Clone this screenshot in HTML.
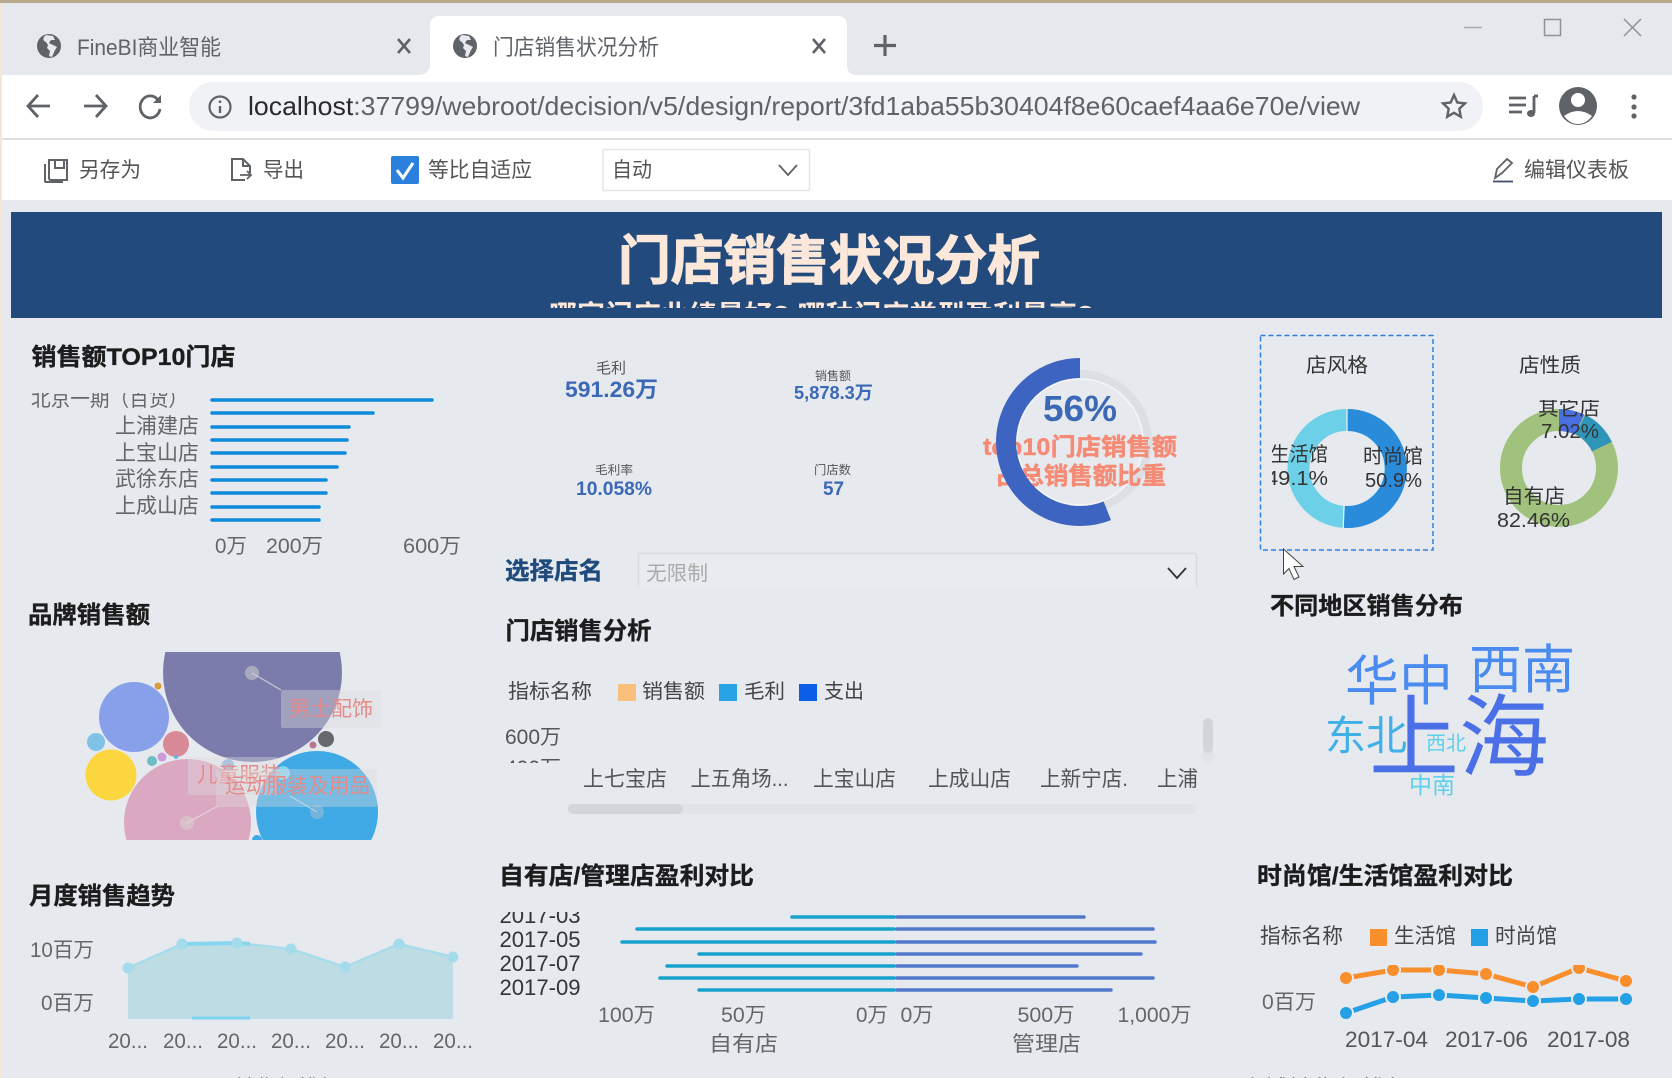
<!DOCTYPE html>
<html lang="zh-CN">
<head>
<meta charset="utf-8">
<title>门店销售状况分析</title>
<style>
html,body{margin:0;padding:0;width:1672px;height:1078px;overflow:hidden;background:#e6e9ee}
svg{display:block}
text{font-family:"Liberation Sans","Noto Sans CJK SC",sans-serif;fill:#555}
.h{font-size:24px;font-weight:700;fill:#1c1c1c;stroke:#1c1c1c;stroke-width:.35px}
.tb{font-size:21px;fill:#555}
.ax{font-size:21px;fill:#666}
.kl{fill:#555}
.kv{font-weight:700;fill:#3c69b5}
.d{font-size:20px;fill:#333}
.lb{font-size:21px;fill:#e58a8a}
.wc{font-weight:400}
</style>
</head>
<body>
<svg xmlns="http://www.w3.org/2000/svg" width="1672" height="1078" viewBox="0 0 1672 1078">
<defs>
<clipPath id="cSub"><rect x="0" y="296" width="1672" height="12"/></clipPath>
<clipPath id="cNorth"><rect x="0" y="393" width="300" height="30"/></clipPath>
<clipPath id="cSel"><rect x="630" y="550" width="580" height="37"/></clipPath>
<clipPath id="cBub"><rect x="60" y="652" width="360" height="188"/></clipPath>
<clipPath id="c400"><rect x="490" y="755" width="90" height="8"/></clipPath>
<clipPath id="cY"><rect x="490" y="912" width="100" height="100"/></clipPath>
<clipPath id="cBox"><rect x="1272" y="400" width="150" height="110"/></clipPath>
<clipPath id="cD2"><rect x="1490" y="400" width="120" height="130"/></clipPath>
<clipPath id="cLine"><rect x="1330" y="965" width="310" height="60"/></clipPath>
<clipPath id="cXL"><rect x="570" y="760" width="628" height="40"/></clipPath>
<g id="globe"><circle cx="0" cy="0" r="12" fill="#5f6368"/><path d="M-3 -11C-7 -8-6-5-3-4L-1-1L-2 2L1 5L0 10L3 11L6 4L8 1L4-1L0-3L2-6L6-6L4-10Z" fill="#e6e9ee"/></g>
<g id="tx"><path d="M-6-7L6 7M6-7L-6 7" stroke="#5f6368" stroke-width="2.600" fill="none"/></g>
</defs>

<!-- chrome -->
<rect width="1672" height="1078" fill="#e6e9ee"/>
<rect y="0" width="1672" height="3" fill="#b9a98c"/>
<rect x="0" y="3" width="1672" height="72" fill="#e5e8ec"/>
<path d="M420 75H430V26Q430 16 440 16H837Q847 16 847 26V65Q847 75 857 75H860V75H420Z" fill="#fff"/>
<path d="M418 75Q430 75 430 63V75Z" fill="#fff"/>
<use href="#globe" x="49" y="46"/>
<text x="77" y="55" font-size="22" textLength="144" lengthAdjust="spacingAndGlyphs" style="fill:#5f6368">FineBI商业智能</text>
<use href="#tx" x="404" y="46"/>
<use href="#globe" x="465" y="46"/>
<text x="493" y="55" font-size="22" textLength="166" lengthAdjust="spacingAndGlyphs" style="fill:#5f6368">门店销售状况分析</text>
<use href="#tx" x="819" y="46"/>
<path d="M874 45.500H896M885 35V56" stroke="#5f6368" stroke-width="3.200" fill="none"/>
<path d="M1464 27.500H1482" stroke="#a8acb2" stroke-width="1.500"/>
<rect x="1544.500" y="19.500" width="16" height="16" fill="none" stroke="#8e9298" stroke-width="1.500"/>
<path d="M1624 19L1641 36M1641 19L1624 36" stroke="#8e9298" stroke-width="1.500" fill="none"/>

<rect x="0" y="75" width="1672" height="63" fill="#fff"/>
<rect x="189" y="82" width="1294" height="49" rx="24" fill="#f0f2f5"/>
<rect x="0" y="138" width="1672" height="2" fill="#dedfe0"/>
<path d="M50 106H29M38 95L28 106L38 117" stroke="#5f6368" stroke-width="2.800" fill="none"/>
<path d="M84 106H105M96 95L106 106L96 117" stroke="#5f6368" stroke-width="2.800" fill="none"/>
<path d="M158 100A10 11 0 1 0 160 109" stroke="#5f6368" stroke-width="2.800" fill="none"/>
<path d="M161 95V103H153Z" fill="#5f6368"/>
<circle cx="220" cy="107" r="10.500" fill="none" stroke="#5f6368" stroke-width="2.200"/>
<path d="M220 106V113M220 100.500V103" stroke="#5f6368" stroke-width="2.400"/>
<text x="248" y="115" font-size="26" textLength="1112" lengthAdjust="spacingAndGlyphs" style="fill:#5f6368"><tspan style="fill:#2a2a2a">localhost</tspan>:37799/webroot/decision/v5/design/report/3fd1aba55b30404f8e60caef4aa6e70e/view</text>
<path d="M1454 95L1457.300 102.500L1465 103.400L1459.300 108.800L1460.800 116.800L1454 112.800L1447.200 116.800L1448.700 108.800L1443 103.400L1450.700 102.500Z" fill="none" stroke="#5f6368" stroke-width="2.400"/>
<path d="M1509 98H1526M1509 105H1526M1509 112H1522" stroke="#5f6368" stroke-width="2.800"/>
<path d="M1534 96V113" stroke="#5f6368" stroke-width="2.800"/><ellipse cx="1531" cy="113.500" rx="4" ry="3.500" fill="#5f6368"/><path d="M1534 96H1538" stroke="#5f6368" stroke-width="2.800"/>
<circle cx="1578" cy="106" r="19" fill="#5f6368"/>
<circle cx="1578" cy="100" r="7" fill="#fff"/>
<path d="M1564 116Q1578 106 1592 116Q1586 124 1578 124Q1570 124 1564 116Z" fill="#fff"/>
<circle cx="1634" cy="97" r="2.600" fill="#5f6368"/><circle cx="1634" cy="107" r="2.600" fill="#5f6368"/><circle cx="1634" cy="116" r="2.600" fill="#5f6368"/>

<rect x="0" y="140" width="1672" height="60" fill="#fff"/>
<path d="M49 160V178Q49 180 51 180H67V160Z" fill="none" stroke="#5f6368" stroke-width="2"/>
<path d="M45 164V181Q45 182 46 182H63" fill="none" stroke="#5f6368" stroke-width="2"/>
<path d="M55 160V168H64V160" fill="none" stroke="#5f6368" stroke-width="2"/>
<text class="tb" x="79" y="177" textLength="62" lengthAdjust="spacingAndGlyphs">另存为</text>
<path d="M245 180H232V159H243L250 166V173M243 159V166H250" fill="none" stroke="#5f6368" stroke-width="2"/>
<path d="M240 175H251M247 171L251 175L247 179" fill="none" stroke="#5f6368" stroke-width="1.800"/>
<text class="tb" x="263" y="177" textLength="41" lengthAdjust="spacingAndGlyphs">导出</text>
<rect x="391" y="156" width="28" height="28" rx="2" fill="#2b80dd"/>
<path d="M397 170L403 178L413 163" fill="none" stroke="#fff" stroke-width="3"/>
<text class="tb" x="428" y="177" textLength="104" lengthAdjust="spacingAndGlyphs">等比自适应</text>
<rect x="603" y="149.500" width="206.500" height="41" rx="1" fill="#fff" stroke="#e4e6e9" stroke-width="1.500"/>
<text class="tb" x="612" y="177" textLength="40" lengthAdjust="spacingAndGlyphs">自动</text>
<path d="M779 165L788 175L797 165" fill="none" stroke="#5f6368" stroke-width="1.800"/>
<path d="M1495 178L1497 169L1507 159L1512 163L1502 173Z" fill="none" stroke="#5f6368" stroke-width="1.800"/>
<path d="M1493 181.500H1513" stroke="#3d4a66" stroke-width="1.800"/>
<text class="tb" x="1524" y="177" textLength="105" lengthAdjust="spacingAndGlyphs">编辑仪表板</text>

<!-- banner -->
<rect x="11" y="212" width="1651" height="106" fill="#234a7c"/>
<text x="618" y="279" font-size="53" font-weight="700" textLength="422" lengthAdjust="spacingAndGlyphs" style="fill:#fbe8da;stroke:#fbe8da;stroke-width:1.200px">门店销售状况分析</text>
<g clip-path="url(#cSub)"><text x="549" y="325" font-size="28" font-weight="700" textLength="545" lengthAdjust="spacingAndGlyphs" style="fill:#fbe8da">哪家门店业绩最好? 哪种门店类型盈利最高?</text></g>

<!-- left edge -->
<rect x="0" y="3" width="2" height="1075" fill="#f7e6d3"/>

<!-- TOP10 -->
<text class="h" x="31.500" y="365" textLength="204" lengthAdjust="spacingAndGlyphs">销售额TOP10门店</text>
<g clip-path="url(#cNorth)"><text class="ax" x="31" y="406" textLength="157" lengthAdjust="spacingAndGlyphs">北京一期（百货）</text></g>
<text class="ax" x="115" y="433" textLength="84" lengthAdjust="spacingAndGlyphs">上浦建店</text>
<text class="ax" x="115" y="460" textLength="84" lengthAdjust="spacingAndGlyphs">上宝山店</text>
<text class="ax" x="115" y="486" textLength="84" lengthAdjust="spacingAndGlyphs">武徐东店</text>
<text class="ax" x="115" y="513" textLength="84" lengthAdjust="spacingAndGlyphs">上成山店</text>
<g stroke="#0b8bdc" stroke-width="3.500" stroke-linecap="round" fill="none">
<path d="M212 400H432M212 413H373M212 427H349M212 440H347M212 453H345M212 467H337M212 480H326M212 493H326M212 507H319M212 520H319"/>
</g>
<text class="ax" x="215" y="553" textLength="32" lengthAdjust="spacingAndGlyphs">0万</text>
<text class="ax" x="266" y="553" textLength="57" lengthAdjust="spacingAndGlyphs">200万</text>
<text class="ax" x="403" y="553" textLength="58" lengthAdjust="spacingAndGlyphs">600万</text>

<!-- KPI -->
<text class="kl" x="596" y="373" font-size="15" textLength="30" lengthAdjust="spacingAndGlyphs">毛利</text>
<text class="kv" x="565" y="397" font-size="22" textLength="93" lengthAdjust="spacingAndGlyphs">591.26万</text>
<text class="kl" x="815" y="380" font-size="12" textLength="36" lengthAdjust="spacingAndGlyphs">销售额</text>
<text class="kv" x="794" y="399" font-size="18" textLength="79" lengthAdjust="spacingAndGlyphs">5,878.3万</text>
<text class="kl" x="595" y="474" font-size="12" textLength="38" lengthAdjust="spacingAndGlyphs">毛利率</text>
<text class="kv" x="576" y="495" font-size="19" textLength="76" lengthAdjust="spacingAndGlyphs">10.058%</text>
<text class="kl" x="814" y="474" font-size="12" textLength="37" lengthAdjust="spacingAndGlyphs">门店数</text>
<text class="kv" x="823" y="495" font-size="19" textLength="21" lengthAdjust="spacingAndGlyphs">57</text>

<!-- gauge -->
<circle cx="1080" cy="442" r="68" fill="none" stroke="#dcdfe4" stroke-width="8"/>
<circle cx="1080" cy="442" r="63" fill="none" stroke="#f3f5f8" stroke-width="1.500"/>
<text x="1043" y="421" font-size="36" font-weight="700" textLength="74" lengthAdjust="spacingAndGlyphs" style="fill:#3c69b5">56%</text>
<text x="983" y="455" font-size="24" font-weight="700" textLength="194" lengthAdjust="spacingAndGlyphs" style="fill:#f58b75;stroke:#f58b75;stroke-width:.4px">top10门店销售额</text>
<text x="995" y="484" font-size="24" font-weight="700" textLength="171" lengthAdjust="spacingAndGlyphs" style="fill:#f58b75;stroke:#f58b75;stroke-width:.4px">占总销售额比重</text>
<path d="M1080 368A74 74 0 1 0 1107.300 510.800" fill="none" stroke="#3d64c0" stroke-width="20"/>

<!-- select store -->
<text x="505" y="579" font-size="24" font-weight="700" textLength="98" lengthAdjust="spacingAndGlyphs" style="fill:#1f4a7c;stroke:#1f4a7c;stroke-width:.35px">选择店名</text>
<g clip-path="url(#cSel)">
<rect x="638.500" y="553.500" width="558" height="60" rx="2" fill="#e8ebef" stroke="#d8dbe0" stroke-width="1.500"/>
<text x="646" y="580" font-size="20" textLength="62" lengthAdjust="spacingAndGlyphs" style="fill:#aaa">无限制</text>
</g>
<path d="M1168 568L1177 578L1186 568" fill="none" stroke="#333" stroke-width="1.800"/>

<!-- style donuts -->
<rect x="1260.500" y="335.500" width="172.500" height="214.500" fill="none" stroke="#2f80e0" stroke-width="1.500" stroke-dasharray="5 3"/>
<text class="d" x="1306" y="372" textLength="62" lengthAdjust="spacingAndGlyphs">店风格</text>
<circle cx="1347" cy="468.500" r="48.500" fill="none" stroke="#6dd0e9" stroke-width="22"/>
<path d="M1347 420A48.500 48.500 0 1 1 1344.300 516.900" fill="none" stroke="#2a8bdb" stroke-width="22"/>
<path d="M1347 409V431M1343.900 506L1343.300 528" stroke="#eef1f5" stroke-width="1.200"/>
<g clip-path="url(#cBox)">
<text class="d" x="1270" y="461" textLength="58" lengthAdjust="spacingAndGlyphs">生活馆</text>
<text class="d" x="1266" y="485" textLength="62" lengthAdjust="spacingAndGlyphs">49.1%</text>
<text class="d" x="1363" y="463" textLength="60" lengthAdjust="spacingAndGlyphs">时尚馆</text>
<text class="d" x="1365" y="487" textLength="57" lengthAdjust="spacingAndGlyphs">50.9%</text>
</g>
<text class="d" x="1519" y="372" textLength="62" lengthAdjust="spacingAndGlyphs">店性质</text>
<circle cx="1559" cy="468" r="48" fill="none" stroke="#a1c27c" stroke-width="22"/>
<path d="M1559 420A48 48 0 0 1 1579.500 424.600" fill="none" stroke="#4a6fe0" stroke-width="22"/>
<path d="M1580.500 424.600A48 48 0 0 1 1601.900 446.600" fill="none" stroke="#2f95b8" stroke-width="22"/>
<g clip-path="url(#cD2)"><text class="d" x="1538" y="415" textLength="62" lengthAdjust="spacingAndGlyphs">其它店</text></g>
<text class="d" x="1541" y="438" textLength="58" lengthAdjust="spacingAndGlyphs">7.02%</text>
<text class="d" x="1503" y="503" textLength="62" lengthAdjust="spacingAndGlyphs">自有店</text>
<text class="d" x="1497" y="527" textLength="73" lengthAdjust="spacingAndGlyphs">82.46%</text>
<path d="M1283.500 549V574L1289 568.500L1294 579.500L1299 577L1294 566.500L1303 566.500Z" fill="#fff" stroke="#444" stroke-width="1"/>

<!-- brand -->
<text class="h" x="28" y="623" textLength="122" lengthAdjust="spacingAndGlyphs">品牌销售额</text>
<g clip-path="url(#cBub)">
<circle cx="252.500" cy="672.500" r="89.500" fill="#7b7cac"/>
<circle cx="134" cy="717" r="35" fill="#88a0ea"/>
<circle cx="96" cy="742" r="9" fill="#7fc2e5"/>
<circle cx="111" cy="775" r="25.500" fill="#fcd63f"/>
<circle cx="176" cy="744" r="13" fill="#d98a96"/>
<circle cx="158" cy="686" r="3.500" fill="#d89c3a"/>
<circle cx="152" cy="761" r="5" fill="#6fbcc5"/>
<circle cx="162" cy="757" r="4.500" fill="#cf9ad8"/>
<circle cx="176" cy="757" r="2" fill="#63b5e8"/>
<circle cx="187.500" cy="822.500" r="63.500" fill="#dba8c2"/>
<circle cx="317" cy="812" r="61" fill="#3fa9e6"/>
<circle cx="326" cy="739" r="8" fill="#66686d"/>
<circle cx="313" cy="745" r="3.500" fill="#b5788e"/>
<circle cx="228" cy="765" r="6" fill="#8fb3de"/>
<circle cx="283" cy="773" r="7" fill="#86d3ec"/>
<circle cx="257" cy="840" r="5" fill="#3fa9e6"/>
<circle cx="252" cy="673" r="7" fill="#a9aabf"/>
<path d="M252 673L281 690" stroke="#c9c9d9" stroke-width="1.200"/>
<circle cx="187" cy="823" r="7" fill="#d9bfc9"/>
<path d="M187 823L218 806" stroke="#e6d2da" stroke-width="1.200"/>
<circle cx="317" cy="812" r="7" fill="#74b5de"/>
<path d="M317 812L290 796" stroke="#a8d2ea" stroke-width="1.200"/>
</g>
<rect x="281" y="690" width="100" height="38" rx="2" fill="#dcdcdc" fill-opacity=".38"/>
<text class="lb" x="289" y="716" textLength="84" lengthAdjust="spacingAndGlyphs">男士配饰</text>
<rect x="188" y="757" width="90" height="38" rx="2" fill="#dcdcdc" fill-opacity=".38"/>
<text class="lb" x="197" y="782" textLength="84" lengthAdjust="spacingAndGlyphs">儿童服装</text>
<rect x="216" y="769" width="161" height="38" rx="2" fill="#dcdcdc" fill-opacity=".38"/>
<text class="lb" x="225" y="793" textLength="145" lengthAdjust="spacingAndGlyphs">运动服装及用品</text>

<!-- store analysis -->
<text class="h" x="505.500" y="639" textLength="146" lengthAdjust="spacingAndGlyphs">门店销售分析</text>
<text x="508" y="698" font-size="20" textLength="84" lengthAdjust="spacingAndGlyphs" style="fill:#444">指标名称</text>
<rect x="618" y="684" width="18" height="17" fill="#f8c07a"/>
<text x="642" y="698" font-size="20" textLength="63" lengthAdjust="spacingAndGlyphs" style="fill:#444">销售额</text>
<rect x="719" y="684" width="18" height="17" fill="#27a3e6"/>
<text x="744" y="698" font-size="20" textLength="41" lengthAdjust="spacingAndGlyphs" style="fill:#444">毛利</text>
<rect x="799" y="684" width="18" height="17" fill="#0b5fe6"/>
<text x="824" y="698" font-size="20" textLength="40" lengthAdjust="spacingAndGlyphs" style="fill:#444">支出</text>
<text class="ax" x="505" y="744" textLength="56" lengthAdjust="spacingAndGlyphs" style="fill:#555">600万</text>
<g clip-path="url(#c400)"><text class="ax" x="505" y="775" textLength="56" lengthAdjust="spacingAndGlyphs" style="fill:#555">400万</text></g>
<rect x="1203" y="718" width="10" height="44" rx="5" fill="#e0e3e8"/>
<rect x="1203" y="718" width="10" height="35" rx="5" fill="#d2d5da"/>
<g clip-path="url(#cXL)">
<text class="ax" x="583" y="786" textLength="84" lengthAdjust="spacingAndGlyphs" style="fill:#555">上七宝店</text>
<text class="ax" x="690.500" y="786" textLength="98" lengthAdjust="spacingAndGlyphs" style="fill:#555">上五角场...</text>
<text class="ax" x="813" y="786" textLength="83" lengthAdjust="spacingAndGlyphs" style="fill:#555">上宝山店</text>
<text class="ax" x="928" y="786" textLength="83" lengthAdjust="spacingAndGlyphs" style="fill:#555">上成山店</text>
<text class="ax" x="1040" y="786" textLength="88" lengthAdjust="spacingAndGlyphs" style="fill:#555">上新宁店.</text>
<text class="ax" x="1157" y="786" textLength="41" lengthAdjust="spacingAndGlyphs" style="fill:#555">上浦</text>
</g>
<rect x="568" y="804" width="629" height="10" rx="5" fill="#e0e3e8"/>
<rect x="568" y="804" width="115" height="10" rx="5" fill="#d2d5da"/>

<!-- word cloud -->
<text class="h" x="1270" y="614" textLength="193" lengthAdjust="spacingAndGlyphs">不同地区销售分布</text>
<text class="wc" x="1345" y="700" font-size="54" textLength="108" lengthAdjust="spacingAndGlyphs" style="fill:#4a8bf0">华中</text>
<text class="wc" x="1469" y="688" font-size="53" textLength="106" lengthAdjust="spacingAndGlyphs" style="fill:#4a8bf0">西南</text>
<text class="wc" x="1369" y="769" font-size="90" textLength="180" lengthAdjust="spacingAndGlyphs" style="fill:#4a6fe6">上海</text>
<text class="wc" x="1325" y="750" font-size="41" textLength="82" lengthAdjust="spacingAndGlyphs" style="fill:#3fb0e8">东北</text>
<text class="wc" x="1426" y="750" font-size="20" textLength="40" lengthAdjust="spacingAndGlyphs" style="fill:#5cd0ea">西北</text>
<text class="wc" x="1409" y="793" font-size="23" textLength="46" lengthAdjust="spacingAndGlyphs" style="fill:#5cd0ea">中南</text>

<!-- monthly -->
<text class="h" x="29" y="904" textLength="146" lengthAdjust="spacingAndGlyphs">月度销售趋势</text>
<text class="ax" x="30" y="957" textLength="64" lengthAdjust="spacingAndGlyphs">10百万</text>
<text class="ax" x="41" y="1010" textLength="53" lengthAdjust="spacingAndGlyphs">0百万</text>
<path d="M128 968L182 944L237 943L291 949L345 967L399 944L453 957V1019H128Z" fill="#bedce3"/>
<path d="M128 968L182 944L237 943L291 949L345 967L399 944L453 957" fill="none" stroke="#a9dcea" stroke-width="2.500"/>
<path d="M182 944L237 943L250 944" fill="none" stroke="#86d6f0" stroke-width="4"/>
<path d="M192 1018H250" stroke="#7dd3f0" stroke-width="3"/>
<g fill="#a5dcec"><circle cx="128" cy="968" r="5.500"/><circle cx="182" cy="944" r="5.500"/><circle cx="237" cy="943" r="5.500"/><circle cx="291" cy="949" r="5.500"/><circle cx="345" cy="967" r="5.500"/><circle cx="399" cy="944" r="5.500"/><circle cx="453" cy="957" r="5.500"/></g>
<text class="ax" x="108" y="1048" textLength="40" lengthAdjust="spacingAndGlyphs">20...</text>
<text class="ax" x="163" y="1048" textLength="40" lengthAdjust="spacingAndGlyphs">20...</text>
<text class="ax" x="217" y="1048" textLength="40" lengthAdjust="spacingAndGlyphs">20...</text>
<text class="ax" x="271" y="1048" textLength="40" lengthAdjust="spacingAndGlyphs">20...</text>
<text class="ax" x="325" y="1048" textLength="40" lengthAdjust="spacingAndGlyphs">20...</text>
<text class="ax" x="379" y="1048" textLength="40" lengthAdjust="spacingAndGlyphs">20...</text>
<text class="ax" x="433" y="1048" textLength="40" lengthAdjust="spacingAndGlyphs">20...</text>

<!-- own/managed -->
<text class="h" x="499" y="884" textLength="255" lengthAdjust="spacingAndGlyphs">自有店/管理店盈利对比</text>
<g clip-path="url(#cY)">
<text x="499.500" y="923" font-size="22" textLength="81" lengthAdjust="spacingAndGlyphs" style="fill:#333">2017-03</text>
<text x="499.500" y="947" font-size="22" textLength="81" lengthAdjust="spacingAndGlyphs" style="fill:#333">2017-05</text>
<text x="499.500" y="971" font-size="22" textLength="81" lengthAdjust="spacingAndGlyphs" style="fill:#333">2017-07</text>
<text x="499.500" y="995" font-size="22" textLength="81" lengthAdjust="spacingAndGlyphs" style="fill:#333">2017-09</text>
</g>
<path d="M894 917H792M894 929H637M894 942H622M894 954H699M894 966H667M894 978H660M894 990H699" stroke="#17a3c9" stroke-width="3.500" stroke-linecap="round" fill="none"/>
<path d="M897 917H1084M897 929H1153M897 942H1155M897 954H1141M897 966H1077M897 978H1153M897 990H1111" stroke="#5079c8" stroke-width="3.500" stroke-linecap="round" fill="none"/>
<text class="ax" x="598" y="1022" textLength="57" lengthAdjust="spacingAndGlyphs">100万</text>
<text class="ax" x="721" y="1022" textLength="45" lengthAdjust="spacingAndGlyphs">50万</text>
<text class="ax" x="856" y="1022" textLength="32" lengthAdjust="spacingAndGlyphs">0万</text>
<text class="ax" x="900.500" y="1022" textLength="33" lengthAdjust="spacingAndGlyphs">0万</text>
<text class="ax" x="1017.500" y="1022" textLength="57" lengthAdjust="spacingAndGlyphs">500万</text>
<text class="ax" x="1117.500" y="1022" textLength="74" lengthAdjust="spacingAndGlyphs">1,000万</text>
<text class="ax" x="709" y="1051" textLength="69" lengthAdjust="spacingAndGlyphs">自有店</text>
<text class="ax" x="1012" y="1051" textLength="69" lengthAdjust="spacingAndGlyphs">管理店</text>

<!-- fashion/life -->
<text class="h" x="1257" y="884" textLength="256" lengthAdjust="spacingAndGlyphs">时尚馆/生活馆盈利对比</text>
<text x="1260" y="943" font-size="21" textLength="83" lengthAdjust="spacingAndGlyphs" style="fill:#444">指标名称</text>
<rect x="1370" y="929" width="17" height="17" fill="#f98f2c"/>
<text x="1394" y="943" font-size="21" textLength="62" lengthAdjust="spacingAndGlyphs" style="fill:#444">生活馆</text>
<rect x="1471" y="929" width="17" height="17" fill="#23a0e6"/>
<text x="1495" y="943" font-size="21" textLength="62" lengthAdjust="spacingAndGlyphs" style="fill:#444">时尚馆</text>
<text class="ax" x="1262" y="1009" textLength="54" lengthAdjust="spacingAndGlyphs">0百万</text>
<g clip-path="url(#cLine)">
<path d="M1346 978L1393 970L1439 970L1486 974L1533 987L1579 968L1626 981" fill="none" stroke="#f98f2c" stroke-width="5"/>
<path d="M1346 1013L1393 997L1439 995L1486 998L1533 1001L1579 999L1626 999" fill="none" stroke="#23a0e6" stroke-width="5"/>
<g fill="#f98f2c" stroke="#e6e9ee" stroke-width="2"><circle cx="1346" cy="978" r="7"/><circle cx="1393" cy="970" r="7"/><circle cx="1439" cy="970" r="7"/><circle cx="1486" cy="974" r="7"/><circle cx="1533" cy="987" r="7"/><circle cx="1579" cy="968" r="7"/><circle cx="1626" cy="981" r="7"/></g>
<g fill="#23a0e6" stroke="#e6e9ee" stroke-width="2"><circle cx="1346" cy="1013" r="7"/><circle cx="1393" cy="997" r="7"/><circle cx="1439" cy="995" r="7"/><circle cx="1486" cy="998" r="7"/><circle cx="1533" cy="1001" r="7"/><circle cx="1579" cy="999" r="7"/><circle cx="1626" cy="999" r="7"/></g>
</g>
<text x="1345" y="1047" font-size="22" textLength="83" lengthAdjust="spacingAndGlyphs" style="fill:#555">2017-04</text>
<text x="1445" y="1047" font-size="22" textLength="83" lengthAdjust="spacingAndGlyphs" style="fill:#555">2017-06</text>
<text x="1547" y="1047" font-size="22" textLength="83" lengthAdjust="spacingAndGlyphs" style="fill:#555">2017-08</text>

<!-- clipped bottom titles -->
<text x="235" y="1095" font-size="21" textLength="105" lengthAdjust="spacingAndGlyphs" style="fill:#666">销售额排行</text>
<text x="1240" y="1095" font-size="21" textLength="170" lengthAdjust="spacingAndGlyphs" style="fill:#666">店铺销售额排行</text>
</svg>
</body>
</html>
